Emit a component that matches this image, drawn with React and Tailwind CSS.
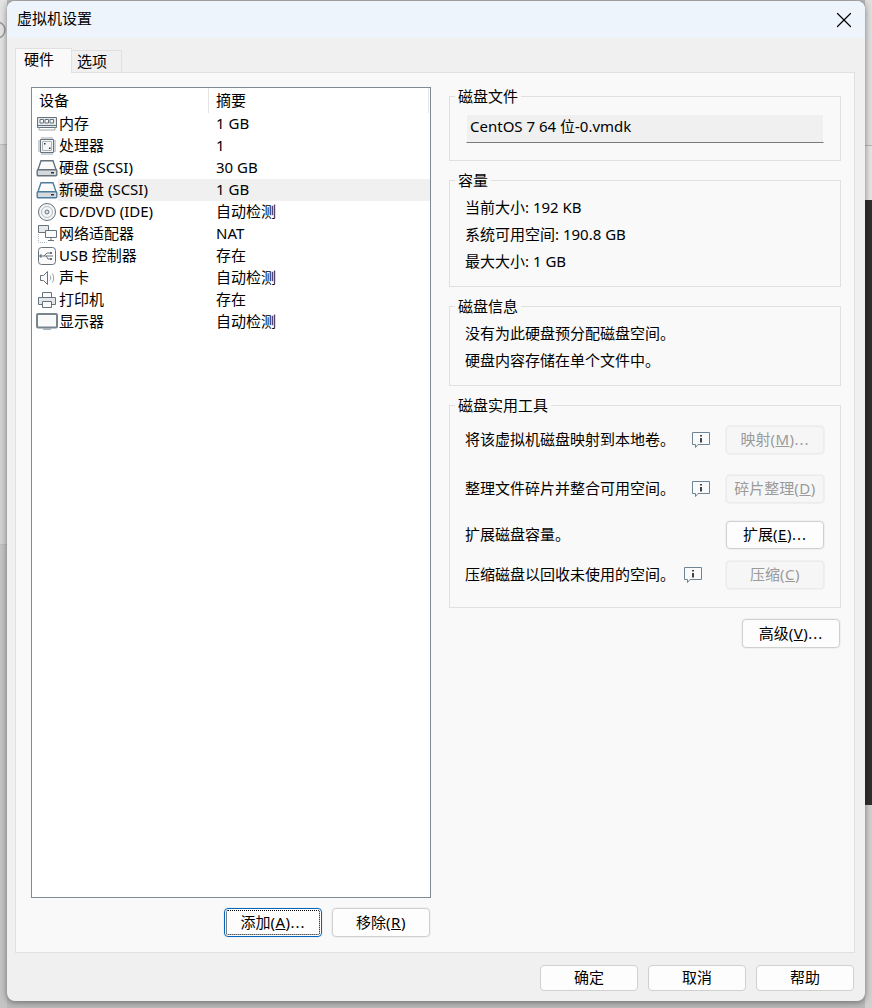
import React from "react";
import { X } from "lucide-react";

const G = "#66737c";

function MemoryIcon() {
  return (
    <svg width="22" height="20" viewBox="0 0 22 20" fill="none" stroke={G}>
      <path d="M1.500 3.500h19v10h-19z" fill="#e6e9eb" />
      <path d="M1.500 11.500h19" />
      <path d="M4 5.500h3.500v3.500H4zM9 5.500h3.500v3.500H9zM14 5.500h3.500v3.500H14z" fill="#fafafa" />
      <path d="M3 13.500v2.500h16v-2.500" stroke="#9aa4ab" />
    </svg>
  );
}

function CpuIcon() {
  return (
    <svg width="22" height="20" viewBox="0 0 22 20" fill="none" stroke={G}>
      <path d="M4.500 3.500h13v13h-13z" fill="#f4f5f6" />
      <path d="M6.500 5.500h9v9h-9z" stroke="#a9b2b8" />
      <path d="M6 1v2M8 1v2M10 1v2M12 1v2M14 1v2M16 1v2M6 17v2M8 17v2M10 17v2M12 17v2M14 17v2M16 17v2M2 5h2M2 7h2M2 9h2M2 11h2M2 13h2M2 15h2M18 5h2M18 7h2M18 9h2M18 11h2M18 13h2M18 15h2" stroke="#9aa4ab" />
      <path d="M8 7h1.500v1.500H8zM13 11.500h1.500V13H13z" fill="#333" stroke="none" />
    </svg>
  );
}

function DiskIcon({ color = G }) {
  return (
    <svg width="22" height="20" viewBox="0 0 22 20" fill="none" stroke={color} strokeWidth="1.400">
      <path d="M5 2.700h12l3.300 9.800H1.700z" fill="#fafafa" />
      <rect x="1.200" y="11.700" width="19.600" height="6" rx="1" fill="#d3d9dc" />
      <path d="M15 14.700h3" stroke="#333" />
    </svg>
  );
}

function CdIcon() {
  return (
    <svg width="22" height="20" viewBox="0 0 22 20" fill="none" stroke={G}>
      <circle cx="11" cy="10" r="8.500" fill="#f4f5f6" />
      <circle cx="11" cy="10" r="5.500" stroke="#b5bcc1" />
      <circle cx="11" cy="10" r="2" fill="#dfe3e5" />
    </svg>
  );
}

function NetworkIcon() {
  return (
    <svg width="22" height="20" viewBox="0 0 22 20" fill="none" stroke={G}>
      <path d="M2.500 1.500h10v7h-10z" fill="#e6e9eb" />
      <path d="M9.500 6.500h11v7h-11z" fill="#fafafa" />
      <path d="M15 13.500v3M12 16.500h6" />
      <path d="M2.500 10v8.500h8" stroke="#a9b2b8" strokeDasharray="1 1" />
    </svg>
  );
}

function UsbIcon() {
  return (
    <svg width="22" height="20" viewBox="0 0 22 20" fill="none" stroke={G}>
      <rect x="2.500" y="1.500" width="17" height="17" rx="3" fill="#fafafa" />
      <path d="M5 10h12M8 10l3-3h3M10 10l2 3h2" />
      <path d="M5 8.500v3l-1.500-1.500z" fill={G} />
      <path d="M14 6h2v2h-2zM14 12h2v2h-2z" fill={G} stroke="none" />
    </svg>
  );
}

function SoundIcon() {
  return (
    <svg width="22" height="20" viewBox="0 0 22 20" fill="none" stroke={G}>
      <path d="M4.500 7.500h3l4-4v13l-4-4h-3z" fill="#fafafa" />
      <path d="M14 7.500c1 1.500 1 3.500 0 5M16.500 5.500c1.500 3 1.500 6 0 9" stroke="#9aa4ab" />
    </svg>
  );
}

function PrinterIcon() {
  return (
    <svg width="22" height="20" viewBox="0 0 22 20" fill="none" stroke={G}>
      <path d="M6.500 2.500h9v5h-9z" fill="#fafafa" />
      <path d="M2.500 7.500h17v7h-17z" fill="#e4e7e9" />
      <path d="M6.500 11.500h9v6h-9z" fill="#fafafa" />
    </svg>
  );
}

function MonitorIcon() {
  return (
    <svg width="22" height="20" viewBox="0 0 22 20" fill="none" stroke="#78848c">
      <rect x="1" y="2" width="20" height="13.500" rx="1" fill="#f8f9f9" strokeWidth="2" />
      <path d="M7 17h8" strokeWidth="2" stroke="#a9b2b8" />
    </svg>
  );
}

function InfoIcon() {
  return (
    <svg width="18" height="17" viewBox="0 0 18 17" fill="none" className="shrink-0">
      <path d="M0.500 0.500h17v12H6l-2.500 3v-3h-3z" fill="#fafafa" stroke="#6f8594" />
      <path d="M8 3h2v1.500H8zM8 6h2v4.500H8z" fill="#39444c" />
    </svg>
  );
}

const devices = [
  { icon: <MemoryIcon />, name: "内存", summary: "1 GB" },
  { icon: <CpuIcon />, name: "处理器", summary: "1" },
  { icon: <DiskIcon />, name: "硬盘 (SCSI)", summary: "30 GB" },
  { icon: <DiskIcon color="#4d7d9e" />, name: "新硬盘 (SCSI)", summary: "1 GB", selected: true },
  { icon: <CdIcon />, name: "CD/DVD (IDE)", summary: "自动检测" },
  { icon: <NetworkIcon />, name: "网络适配器", summary: "NAT" },
  { icon: <UsbIcon />, name: "USB 控制器", summary: "存在" },
  { icon: <SoundIcon />, name: "声卡", summary: "自动检测" },
  { icon: <PrinterIcon />, name: "打印机", summary: "存在" },
  { icon: <MonitorIcon />, name: "显示器", summary: "自动检测" },
];

function Btn({ label, mn, tail = "", disabled, focused, className = "" }) {
  const look = focused
    ? "text-black bg-[#fdfdfd] border-[#0067c0] outline-1 outline-dotted outline-black -outline-offset-3"
    : disabled
      ? "text-[#9a9a9a] bg-[#f6f6f6] border-[#ececec]"
      : "text-black bg-[#fdfdfd] border-[#d0d0d0]";
  return (
    <button
      type="button"
      disabled={disabled}
      className={`w-[98px] shrink-0 flex items-center justify-center pb-[2px] rounded-[4px] border ring-1 ring-[#f0f0f0] whitespace-nowrap ${look} ${className}`}
    >
      {label}
      {mn && (
        <span className="tracking-[0.5px]">
          (<span className="underline">{mn}</span>)
        </span>
      )}
      {tail && <span className="tracking-[1px]">{tail}</span>}
    </button>
  );
}

function Group({ title, className = "", children }) {
  return (
    <fieldset className={`border border-[#e0e0e0] ${className}`}>
      <legend className="ml-[5px] px-[3px] h-[20px] leading-[20px]">{title}</legend>
      {children}
    </fieldset>
  );
}

function UtilRow({ text, button, info, infoGap = "mr-[16px]", className = "" }) {
  return (
    <div className={`flex items-center h-[28px] ${className}`}>
      <span className="pb-[2px]">{text}</span>
      {info && (
        <span className={`ml-auto ${infoGap}`}>
          <InfoIcon />
        </span>
      )}
      <span className={info ? "" : "ml-auto"}>{button}</span>
    </div>
  );
}

export default function App() {
  return (
    <div className="w-[872px] h-[1008px] overflow-hidden flex bg-[#b9b9b9] text-[15px] leading-[22px] text-black font-['Noto_Sans','Noto_Sans_CJK_SC',sans-serif]">
      {/* what shows behind the dialog */}
      <div className="w-[7px] shrink-0 flex flex-col">
        <div className="h-[145px] bg-[#e2e2e2] border-b border-[#bdbdbd] pt-[20px]">
          <svg width="7" height="20" viewBox="0 0 7 20" fill="none" stroke="#9a9a9a" strokeWidth="1.500">
            <circle cx="-3" cy="10" r="8" />
          </svg>
        </div>
        <div className="h-[400px] bg-[#d2d2d2] border-b border-[#bdbdbd]" />
        <div className="flex-1 bg-[#c4c4c4]" />
      </div>

      {/* dialog */}
      <div className="w-[858px] h-[1000px] mt-px shrink-0 flex flex-col rounded-[8px] bg-[#f0f0f0] overflow-hidden shadow-[0_1px_6px_rgba(0,0,0,0.45)] relative z-10">
        <div className="h-[37px] shrink-0 flex items-center justify-between pl-[10px] pr-[8px] bg-[#eef4fb]">
          <span className="pb-[4px]">虚拟机设置</span>
          <X size={26} strokeWidth={1.1} />
        </div>

        {/* tabs */}
        <div className="h-[34px] shrink-0 flex items-end pl-[8px]">
          <div className="w-[57px] h-[25px] -mb-px relative z-10 flex items-center pl-[8px] pb-[4px] bg-[#f9f9f9] border border-b-0 border-[#e0e0e0]">硬件</div>
          <div className="w-[50px] h-[22px] flex items-center pl-[5px] pb-[2px] bg-[#f0f0f0] border border-l-0 border-b-0 border-[#e0e0e0]">选项</div>
        </div>

        <div className="ml-[8px] mr-[10px] h-[881px] shrink-0 flex gap-[18px] pl-[15px] pt-[14px] border border-[#e0e0e0] bg-[#f9f9f9]">
          {/* left: device list */}
          <div className="w-[400px] shrink-0 flex flex-col">
            <div className="h-[811px] shrink-0 bg-white border border-[#7f8a92]">
              <div className="h-[25px] flex items-center">
                <div className="w-[177px] h-full pl-[7px] pb-[2px] flex items-center border-r border-[#e5e5e5]">设备</div>
                <div className="flex-1 h-full pl-[7px] pb-[2px] flex items-center border-r border-[#e5e5e5] mr-px">摘要</div>
              </div>
              {devices.map((d) => (
                <div key={d.name} className="h-[22px] flex items-center">
                  <div className="w-[26px] pl-[4px] shrink-0 flex">{d.icon}</div>
                  <div className={`flex flex-1 h-full items-center pb-[2px] ${d.selected ? "bg-[#f0f0f0]" : ""}`}>
                    <div className="w-[158px] pl-[1px] whitespace-nowrap">{d.name}</div>
                    <div>{d.summary}</div>
                  </div>
                </div>
              ))}
            </div>
            <div className="flex justify-end gap-[10px] mt-[10px] pr-px">
              <Btn label="添加" mn="A" tail="..." focused className="h-[29px]" />
              <Btn label="移除" mn="R" className="h-[29px]" />
            </div>
          </div>

          {/* right: disk details */}
          <div className="w-[392px] shrink-0 flex flex-col gap-[9px] -mt-px">
            <Group title="磁盘文件" className="h-[75px]">
              <div className="mx-[16px] mt-[8px] h-[29px] pl-[3px] pb-[6px] flex items-center bg-[#f0f0f0] border border-[#fafafa] border-b-[#7a7a7a]">
                CentOS 7 64 位-0.vmdk
              </div>
            </Group>
            <Group title="容量" className="h-[117px]">
              <div className="pl-[15px] pt-[6px] flex flex-col gap-[5px]">
                <div>当前大小: 192 KB</div>
                <div>系统可用空间: 190.8 GB</div>
                <div>最大大小: 1 GB</div>
              </div>
            </Group>
            <Group title="磁盘信息" className="h-[90px]">
              <div className="pl-[15px] pt-[6px] flex flex-col gap-[5px]">
                <div>没有为此硬盘预分配磁盘空间。</div>
                <div>硬盘内容存储在单个文件中。</div>
              </div>
            </Group>
            <Group title="磁盘实用工具" className="h-[213px]">
              <div className="pl-[15px] pr-[16px] pt-[11px]">
                <UtilRow text="将该虚拟机磁盘映射到本地卷。" info button={<Btn label="映射" mn="M" tail="..." disabled className="h-[28px]" />} />
                <UtilRow text="整理文件碎片并整合可用空间。" info className="mt-[21px]" button={<Btn label="碎片整理" mn="D" disabled className="h-[28px]" />} />
                <UtilRow text="扩展磁盘容量。" className="mt-[18px]" button={<Btn label="扩展" mn="E" tail="..." className="h-[28px]" />} />
                <UtilRow text="压缩磁盘以回收未使用的空间。" info infoGap="mr-[24px]" className="mt-[12px]" button={<Btn label="压缩" mn="C" disabled className="h-[28px]" />} />
              </div>
            </Group>
            <div className="flex justify-end pr-px mt-[2px]">
              <Btn label="高级" mn="V" tail="..." className="h-[29px]" />
            </div>
          </div>
        </div>

        <div className="flex justify-end gap-[10px] pr-[11px] mt-[12px]">
          <Btn label="确定" className="h-[26px]" />
          <Btn label="取消" className="h-[26px]" />
          <Btn label="帮助" className="h-[26px]" />
        </div>
      </div>

      <div className="w-[7px] shrink-0 flex flex-col">
        <div className="h-[146px] bg-[#dedede] border-b border-[#b5b5b5]" />
        <div className="h-[54px] bg-[#e4e4e4]" />
        <div className="h-[605px] bg-[#2e2e2e]" />
        <div className="flex-1 bg-[#d0d0d0]" />
      </div>
    </div>
  );
}
